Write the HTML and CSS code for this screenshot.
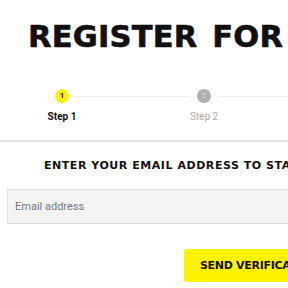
FILE: index.html
```html
<!DOCTYPE html>
<html lang="en">
<head>
  <meta charset="UTF-8" />
  <meta name="viewport" content="width=device-width, initial-scale=1.0"/>
  <title>Register</title>
  <link rel="stylesheet" href="styles.css">
</head>
<body>
  <div class="page">
    <h1 class="title">REGISTER FOR FREE</h1>

    <div class="steps">
      <div class="step active">
        <span class="dot">1</span>
        <span class="label">Step 1</span>
      </div>
      <div class="bar"></div>
      <div class="step">
        <span class="dot">2</span>
        <span class="label">Step 2</span>
      </div>
      <div class="bar"></div>
    </div>

    <div class="form">
      <h2 class="lead">ENTER YOUR EMAIL ADDRESS TO START</h2>
      <input type="text" class="email" placeholder="Email address" />
      <div class="actions">
        <button class="send">SEND VERIFICATION CODE</button>
      </div>
    </div>
  </div>
</body>
</html>
```

FILE: styles.css
```css
body {
  margin: 0;
  background: #fff;
  font-family: Roboto, Arial, sans-serif;
  color: #111;
  overflow: hidden;
}
.page {
  width: 288px;
  overflow: hidden;
  white-space: nowrap;
}
.title {
  margin: 0;
  padding: 22px 0 0 28px;
  font-family: "DejaVu Sans", sans-serif;
  font-weight: bold;
  font-size: 30.5px;
  line-height: 30px;
  letter-spacing: 0.2px;
  word-spacing: 4px;
  -webkit-text-stroke: 0.6px #111;
}
.steps {
  display: flex;
  align-items: flex-start;
  padding: 37px 0 0 48px;
  height: 51px;
  border-bottom: 2px solid #e0e0e0;
}
.step {
  display: flex;
  flex-direction: column;
  align-items: center;
  width: 28px;
  flex: none;
}
.dot {
  width: 14px;
  height: 14px;
  border-radius: 50%;
  background: #b0b0b0;
  color: #ccc;
  font-size: 8px;
  font-weight: bold;
  line-height: 14px;
  text-align: center;
}
.label {
  margin-top: 8px;
  font-size: 10px;
  color: #aaa;
}
.step.active .dot {
  background: #fff200;
  color: #111;
}
.step.active .label {
  color: #111;
  font-weight: bold;
}
.bar {
  width: 114px;
  flex: none;
  height: 1px;
  margin-top: 7px;
  background: #eee;
}
.form {
  padding: 18px 0 0 7px;
}
.lead {
  margin: 0 0 0 37px;
  font-family: "DejaVu Sans", sans-serif;
  font-weight: bold;
  font-size: 11px;
  line-height: 12px;
  letter-spacing: 0.55px;
}
.email {
  display: block;
  box-sizing: border-box;
  width: 320px;
  height: 35px;
  margin-top: 17px;
  padding: 0 7px;
  border: 1px solid #ddd;
  background: #f4f4f4;
  font-family: Roboto, Arial, sans-serif;
  font-size: 11px;
}
.email::placeholder {
  color: #777;
}
.actions {
  padding: 25px 0 0 177px;
}
.send {
  height: 33px;
  padding: 0 16px;
  border: none;
  border-radius: 3px;
  background: #fff200;
  font-family: "DejaVu Sans", sans-serif;
  font-weight: bold;
  font-size: 11px;
  letter-spacing: -0.3px;
  color: #111;
  white-space: nowrap;
}
```
